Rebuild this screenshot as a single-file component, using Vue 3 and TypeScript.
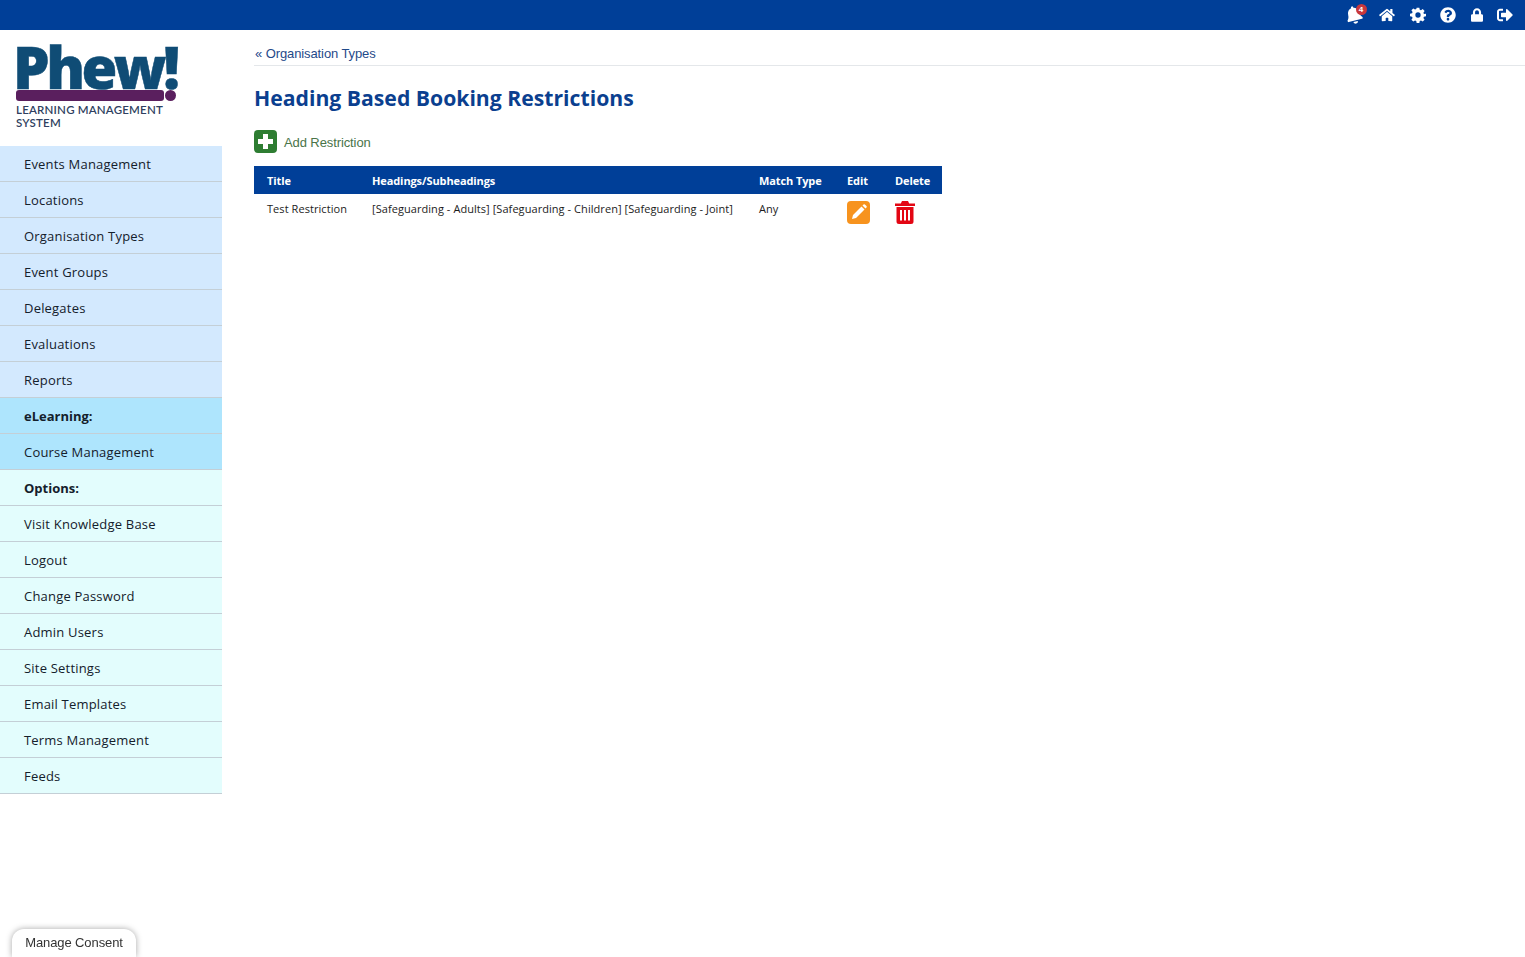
<template>
  <div class="topbar">
    <div class="bell">
      <svg class="bell-ico" width="16" height="18" viewBox="0 0 448 512"><path fill="#fff" d="M224 512c35 0 64-29 64-64H160c0 35 29 64 64 64zm215-150c-19-21-55-52-55-154 0-78-54-140-128-155V32a32 32 0 0 0-64 0v21C118 68 64 130 64 208c0 102-36 133-55 154-6 6-9 14-9 22 0 16 13 32 32 32h384c19 0 32-16 32-32 0-8-3-16-9-22z"/></svg>
      <span class="badge">4</span>
    </div>
    <svg width="16" height="14" viewBox="0 0 576 512"><path fill="#fff" d="M280 148 96 300v164c0 9 7 16 16 16l112-1c9 0 16-7 16-16v-95c0-9 7-16 16-16h64c9 0 16 7 16 16v95c0 9 7 16 16 16l112 1c9 0 16-7 16-16V300L296 148c-5-4-11-4-16 0zm291 103-83-69V44c0-7-5-12-12-12h-56c-7 0-12 5-12 12v73l-90-74a48 48 0 0 0-61 0L5 251c-5 4-6 12-2 17l26 31c4 5 12 6 17 2L280 108c5-4 11-4 16 0l234 193c5 4 13 3 17-2l26-31c4-5 3-13-2-18z"/></svg>
    <svg width="16" height="16" viewBox="0 0 24 24"><path fill="#fff" fill-rule="evenodd" d="M10 1h4l.6 3.100 1.900.8 2.600-1.800 2.800 2.800-1.800 2.600.8 1.900L24 10v4l-3.100.6-.8 1.900 1.800 2.600-2.800 2.800-2.600-1.800-1.900.8L14 24h-4l-.6-3.100-1.900-.8-2.600 1.800-2.800-2.800 1.800-2.600-.8-1.900L0 14v-4l3.100-.6.8-1.900L2.100 4.900l2.800-2.800 2.600 1.800 1.900-.8zM12 8a4 4 0 1 0 0 8 4 4 0 0 0 0-8z"/></svg>
    <svg width="16" height="16" viewBox="0 0 512 512"><path fill="#fff" d="M504 256c0 137-111 248-248 248S8 393 8 256 119 8 256 8s248 111 248 248zM263 90c-55 0-89 23-116 63-4 5-3 12 3 16l35 26c5 4 13 3 17-2 18-23 30-36 58-36 21 0 47 13 47 34 0 15-13 23-34 35-25 14-57 31-57 74v6c0 7 5 12 12 12h56c7 0 12-5 12-12v-3c0-30 87-31 87-111 0-60-62-102-120-102zm-7 256c-23 0-42 19-42 42s19 42 42 42 42-19 42-42-19-42-42-42z"/></svg>
    <svg width="12" height="14" viewBox="0 0 448 512"><path fill="#fff" d="M400 224h-24v-72C376 68 308 0 224 0S72 68 72 152v72H48c-26 0-48 22-48 48v192c0 26 22 48 48 48h352c26 0 48-22 48-48V272c0-26-22-48-48-48zm-104 0H152v-72c0-40 32-72 72-72s72 32 72 72v72z"/></svg>
    <svg width="16" height="14" viewBox="0 0 512 448"><path fill="#fff" d="M497 207 329 39c-15-15-41-4-41 17v96H152c-13 0-24 11-24 24v96c0 13 11 24 24 24h136v96c0 21 26 32 41 17l168-168c9-9 9-25 0-34zM192 412v-40c0-7-5-12-12-12H96c-18 0-32-14-32-32V120c0-18 14-32 32-32h84c7 0 12-5 12-12V36c0-7-5-12-12-12H96C43 24 0 67 0 120v208c0 53 43 96 96 96h84c7 0 12-5 12-12z"/></svg>
  </div>

  <div class="layout">
    <aside class="sidebar">
      <div class="logo">
        <div class="logo-word">Phew!</div>
        <div class="logo-bar"><span class="bar"></span><span class="dot"></span></div>
        <div class="logo-sub">LEARNING MANAGEMENT<br />SYSTEM</div>
      </div>
      <ul class="menu">
        <li v-for="item in menu" :key="item.label" :class="[item.tone, { head: item.head }]">{{ item.label }}</li>
      </ul>
    </aside>

    <main class="content">
      <div class="crumb">« Organisation Types</div>
      <h1>Heading Based Booking Restrictions</h1>
      <div class="add">
        <svg width="23" height="23" viewBox="0 0 23 23">
          <rect width="23" height="23" rx="4" fill="#2e7d32" />
          <path d="M9 4h5v5h5v5h-5v5H9v-5H4V9h5z" fill="#fff" />
        </svg>
        <span>Add Restriction</span>
      </div>
      <table>
        <thead>
          <tr>
            <th class="c1">Title</th>
            <th class="c2">Headings/Subheadings</th>
            <th class="c3">Match Type</th>
            <th class="c4">Edit</th>
            <th class="c5">Delete</th>
          </tr>
        </thead>
        <tbody>
          <tr v-for="row in rows" :key="row.title">
            <td class="c1">{{ row.title }}</td>
            <td class="c2">{{ row.headings }}</td>
            <td class="c3">{{ row.match }}</td>
            <td class="c4">
              <svg width="23" height="23" viewBox="0 0 23 23">
                <rect width="23" height="23" rx="4" fill="#f7931e" />
                <path d="M14.500 5.500 17.500 8.500 9 17l-4 1 1-4zM15.500 4.500l1-1a1 1 0 0 1 1.400 0l1.600 1.600a1 1 0 0 1 0 1.400l-1 1z" fill="#fff" />
              </svg>
            </td>
            <td class="c5">
              <svg width="20" height="23" viewBox="0 0 20 23">
                <path fill="#e30613" fill-rule="evenodd" d="M7 0h6l1.200 2.500H20v2.500H0V2.500h5.800zM1.500 6h17v14.500a2.500 2.500 0 0 1-2.500 2.500H4a2.500 2.500 0 0 1-2.500-2.500zM5 9v10.500h2V9zm4 0v10.500h2V9zm4 0v10.500h2V9z" />
              </svg>
            </td>
          </tr>
        </tbody>
      </table>
    </main>
  </div>

  <div class="consent">Manage Consent</div>
</template>

<script setup lang="ts">
interface MenuItem {
  label: string
  tone: string
  head?: boolean
}

const menu: MenuItem[] = [
  { label: 'Events Management', tone: 'blue' },
  { label: 'Locations', tone: 'blue' },
  { label: 'Organisation Types', tone: 'blue' },
  { label: 'Event Groups', tone: 'blue' },
  { label: 'Delegates', tone: 'blue' },
  { label: 'Evaluations', tone: 'blue' },
  { label: 'Reports', tone: 'blue' },
  { label: 'eLearning:', tone: 'sky', head: true },
  { label: 'Course Management', tone: 'sky' },
  { label: 'Options:', tone: 'mint', head: true },
  { label: 'Visit Knowledge Base', tone: 'mint' },
  { label: 'Logout', tone: 'mint' },
  { label: 'Change Password', tone: 'mint' },
  { label: 'Admin Users', tone: 'mint' },
  { label: 'Site Settings', tone: 'mint' },
  { label: 'Email Templates', tone: 'mint' },
  { label: 'Terms Management', tone: 'mint' },
  { label: 'Feeds', tone: 'mint' }
]

const rows = [
  {
    title: 'Test Restriction',
    headings: '[Safeguarding - Adults] [Safeguarding - Children] [Safeguarding - Joint]',
    match: 'Any'
  }
]
</script>

<style>
html,
body {
  margin: 0;
  background: #fff;
}
</style>

<style scoped>
.topbar {
  height: 30px;
  background: #003f98;
  display: flex;
  align-items: center;
  justify-content: flex-end;
  gap: 14.5px;
  padding-right: 12px;
}
.bell {
  position: relative;
  display: flex;
  margin-right: 3px;
}
.bell-ico {
  transform: rotate(-14deg);
}
.badge {
  position: absolute;
  top: -2px;
  right: -5px;
  width: 11px;
  height: 11px;
  border-radius: 50%;
  background: #c8373c;
  color: #fff;
  font: bold 8px/11px "Liberation Sans", sans-serif;
  text-align: center;
}
.layout {
  display: flex;
}
.sidebar {
  width: 222px;
  flex: none;
}
.logo {
  height: 116px;
  box-sizing: border-box;
  padding: 10px 0 0 16px;
}
.logo-word {
  font: 800 58px/54px "Open Sans", sans-serif;
  letter-spacing: -3.5px;
  color: #0f4c75;
  -webkit-text-stroke: 0.5px #0f4c75;
  margin-left: -3px;
  height: 50px;
}
.logo-bar {
  display: flex;
  gap: 1px;
  width: 160px;
  height: 11px;
}
.bar {
  flex: 1;
  background: #5a1f5e;
  border-radius: 3px;
}
.dot {
  width: 11px;
  background: #5a1f5e;
  border-radius: 50%;
}
.logo-sub {
  font: 600 11.5px/13px Lato, sans-serif;
  letter-spacing: 0.2px;
  color: #2f3f60;
  margin-top: 2px;
}
.menu {
  list-style: none;
  margin: 0;
  padding: 0;
}
.menu li {
  height: 36px;
  box-sizing: border-box;
  padding-left: 24px;
  border-bottom: 1px solid #c4cfd6;
  font: 13px/36px "Open Sans", sans-serif;
  letter-spacing: 0.2px;
  color: #14202b;
}
.menu li.blue {
  background: #d3e9fe;
}
.menu li.sky {
  background: #aee5fd;
}
.menu li.mint {
  background: #e3fdfd;
}
.menu li.head {
  font-weight: 700;
  letter-spacing: 0;
}
.content {
  flex: 1;
  padding-left: 32px;
  min-width: 0;
}
.crumb {
  height: 36px;
  box-sizing: border-box;
  padding: 16px 0 0 1px;
  border-bottom: 1px solid #e4e7ea;
  font: 13px/15px "Liberation Sans", sans-serif;
  letter-spacing: -0.1px;
  color: #1f4a8a;
}
h1 {
  margin: 17px 0 0;
  font: 700 21.2px/30px "Open Sans", sans-serif;
  color: #0b3f8f;
}
.add {
  display: flex;
  align-items: center;
  gap: 7px;
  margin-top: 17px;
  height: 23px;
  font: 13px/15px "Liberation Sans", sans-serif;
  letter-spacing: -0.1px;
  color: #4a7449;
}
.add span {
  padding-top: 2px;
}
table {
  border-collapse: collapse;
  margin-top: 13px;
  width: 688px;
  table-layout: fixed;
  font-family: "Open Sans", sans-serif;
  font-size: 11px;
}
th {
  background: #003f98;
  color: #fff;
  height: 28px;
  padding: 0;
  text-align: left;
  font-weight: 700;
  letter-spacing: -0.1px;
}
td {
  padding: 7px 0 0;
  height: 40px;
  box-sizing: border-box;
  vertical-align: top;
  color: #1c1c1c;
  letter-spacing: 0.06px;
}
.c1 {
  width: 105px;
  padding-left: 13px;
}
.c2 {
  width: 387px;
}
.c3 {
  width: 88px;
}
.c4 {
  width: 48px;
}
td svg {
  display: block;
}
.consent {
  position: fixed;
  left: 12px;
  bottom: 0;
  width: 124px;
  height: 28px;
  box-sizing: border-box;
  background: #fff;
  border-radius: 12px 12px 0 0;
  box-shadow: 0 0 6px rgba(0, 0, 0, 0.35);
  text-align: center;
  font: 13px/27px "Liberation Sans", sans-serif;
  letter-spacing: -0.1px;
  color: #333;
}
</style>
